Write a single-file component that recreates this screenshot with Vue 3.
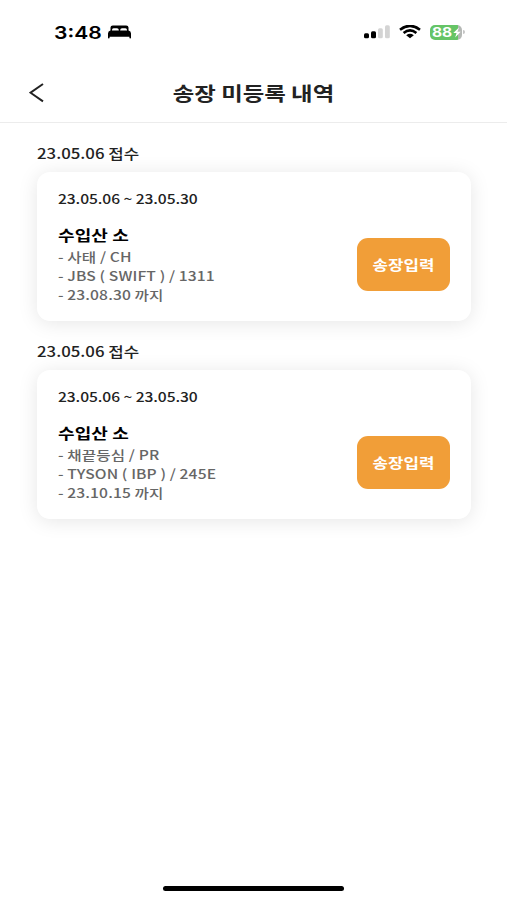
<script setup>
const receipts = [
  {
    date: '23.05.06 접수',
    range: '23.05.06 ~ 23.05.30',
    name: '수입산 소',
    details: ['- 사태 / CH', '- JBS ( SWIFT ) / 1311', '- 23.08.30 까지'],
  },
  {
    date: '23.05.06 접수',
    range: '23.05.06 ~ 23.05.30',
    name: '수입산 소',
    details: ['- 채끝등심 / PR', '- TYSON ( IBP ) / 245E', '- 23.10.15 까지'],
  },
]
</script>

<template>
  <div class="screen">
    <div class="status">
      <div class="clock">
        <span class="time">3:48</span>
        <svg class="bed" width="23" height="14" viewBox="0 0 23 14">
          <path d="M2.5 6V2.5Q2.5.5 4.8.5H18.2Q20.5.5 20.5 2.5V6H19V5Q19 3.3 17.4 3.3H14Q12.3 3.3 12.2 5V6H10.8V5Q10.7 3.3 9 3.3H5.6Q4 3.3 4 5V6Z" />
          <path d="M2.5 5.6H20.5Q23 6 23 8.5V12.8Q23 13.5 22.2 13.5T21.4 12.8V11.8H1.6V12.8Q1.6 13.5.8 13.5T0 12.8V8.5Q0 6 2.5 5.6Z" />
        </svg>
      </div>
      <div class="indicators">
        <svg width="26" height="14" viewBox="0 0 26 14">
          <rect x="0" y="8.2" width="5" height="5" rx="1.5" />
          <rect x="7" y="6.2" width="5" height="7" rx="1.5" />
          <rect x="14" y="3.2" width="4.8" height="10" rx="1.5" fill="#d4d4d4" />
          <rect x="21" y="0.2" width="4.8" height="13" rx="1.5" fill="#d4d4d4" />
        </svg>
        <svg class="wifi" width="22" height="14" viewBox="0 0 22 14">
          <g fill="none" stroke="#000" stroke-width="2.6">
            <path d="M1 4.7Q11-2.9 21 4.7" />
            <path d="M4.6 8Q11 2.9 17.4 8" />
          </g>
          <path d="M11 13.2 7.2 10.2Q11 7.5 14.8 10.2Z" />
        </svg>
        <div class="battery">
          <span class="level">88</span>
          <svg class="bolt" width="8" height="11" viewBox="0 0 9 11">
            <path fill="#fff" d="M6.7 0 .3 6.2H4L2.4 11 8.7 4.6H5.1Z" />
          </svg>
        </div>
        <span class="cap"></span>
      </div>
    </div>

    <header class="header">
      <svg class="back" width="16" height="20" viewBox="0 0 16 20">
        <path d="M14 1 1.5 9.7 14 18.4" fill="none" stroke="#222" stroke-width="2" />
      </svg>
      <h1 class="title">송장 미등록 내역</h1>
    </header>

    <main class="list">
      <section v-for="(r, i) in receipts" :key="i" class="group">
        <h2 class="date">{{ r.date }}</h2>
        <article class="card">
          <div class="info">
            <p class="range">{{ r.range }}</p>
            <h3 class="name">{{ r.name }}</h3>
            <p v-for="line in r.details" :key="line" class="detail">{{ line }}</p>
          </div>
          <button class="action"><span>송장입력</span></button>
        </article>
      </section>
    </main>
    <div class="home"></div>
  </div>
</template>

<style>
body {
  margin: 0;
  background: #fff;
}
</style>

<style scoped>
.screen {
  display: flex;
  flex-direction: column;
  width: 507px;
  height: 900px;
  overflow: hidden;
  background: #fff;
  font-family: "Noto Sans CJK KR", sans-serif;
}
h1, h2, h3, p {
  margin: 0;
}
.status {
  display: flex;
  justify-content: space-between;
  box-sizing: border-box;
  height: 64px;
  padding: 22px 42px 0 54px;
}
.clock, .indicators {
  display: flex;
  align-items: center;
  height: 20px;
}
.time {
  width: 54px;
  padding-top: 1px;
  font: 600 17.6px/20px Inter, sans-serif;
  transform: scaleX(1.2);
  transform-origin: left;
  white-space: nowrap;
}
.wifi {
  margin-left: 9px;
}
.battery {
  display: flex;
  align-items: center;
  justify-content: center;
  width: 32px;
  height: 15px;
  margin-left: 9px;
  border-radius: 5px;
  background: linear-gradient(90deg, #65c466 88%, #b5b8b5 88%);
}
.level {
  width: 20px;
  font: 700 12.5px/15px Inter, sans-serif;
  color: #fff;
  transform: scaleX(1.24);
  transform-origin: left;
}
.bolt {
  margin-left: 1px;
}
.cap {
  width: 2px;
  height: 4px;
  margin-left: 1px;
  border-radius: 0 2px 2px 0;
  background: #c5c5c5;
}
.header {
  display: grid;
  grid-template-columns: 44px 1fr 44px;
  align-items: center;
  box-sizing: border-box;
  height: 59px;
  border-bottom: 1.5px solid #ececec;
}
.back {
  margin-left: 29px;
}
.title {
  text-align: center;
  font-size: 19.5px;
  font-weight: 700;
  line-height: 28px;
  color: #222;
  transform: scaleX(1.2);
}
.list {
  flex: 1;
  padding: 19px 36px 0 37px;
}
.group {
  height: 198.4px;
}
.date {
  height: 30px;
  font-size: 14px;
  font-weight: 500;
  line-height: 22px;
  color: #222;
  transform: scaleX(1.2);
  transform-origin: left;
}
.card {
  display: flex;
  justify-content: space-between;
  box-sizing: border-box;
  height: 149px;
  padding: 16px 21px 0 21px;
  border-radius: 13px;
  background: #fff;
  box-shadow: 0 2px 20px rgba(0, 0, 0, 0.1);
}
.info {
  transform: scaleX(1.2);
  transform-origin: left;
  white-space: nowrap;
}
.range {
  font-size: 13px;
  font-weight: 500;
  line-height: 22px;
  letter-spacing: -0.07px;
  color: #222;
}
.name {
  margin-top: 13px;
  font-size: 15px;
  font-weight: 700;
  line-height: 24px;
  letter-spacing: 0.1px;
  color: #000;
}
.detail {
  font-size: 13px;
  font-weight: 500;
  line-height: 19px;
  letter-spacing: 0.1px;
  color: #666;
}
.action {
  width: 93px;
  height: 53px;
  margin-top: 50px;
  padding: 0 0 2px;
  border: 0;
  border-radius: 11px;
  background: #f19e38;
  color: #fff;
  font: 700 14px/20px "Noto Sans CJK KR", sans-serif;
}
.action span {
  display: block;
  transform: scaleX(1.2);
}
.home {
  align-self: center;
  width: 181px;
  height: 5px;
  margin-bottom: 9px;
  border-radius: 3px;
  background: #000;
}
</style>
